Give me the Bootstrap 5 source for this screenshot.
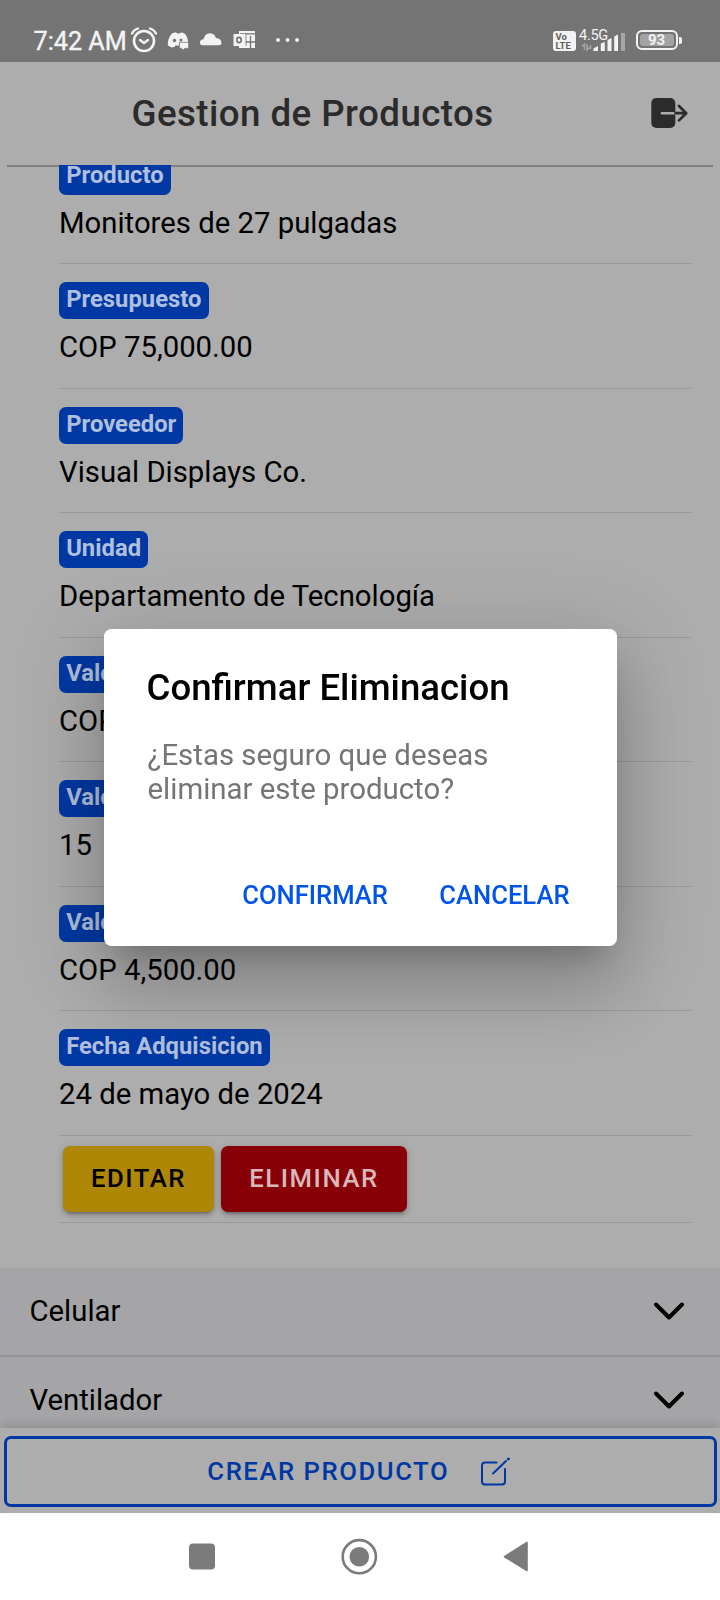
<!DOCTYPE html>
<html lang="es">
<head>
<meta charset="utf-8">
<meta name="viewport" content="width=device-width, initial-scale=1">
<title>Gestion de Productos</title>
<link href="https://cdn.jsdelivr.net/npm/bootstrap@5.3.0/dist/css/bootstrap.min.css" rel="stylesheet">
<style>
:root{--blue:#0038a3;--page:#adadad}
body{font-family:Roboto,"Liberation Sans",sans-serif;background:#fff;color:#000;font-size:29.3px;letter-spacing:0}
.screen{width:720px;height:1600px;overflow:hidden}
svg{display:block;flex:none}
.statusbar{height:62px;background:#747474;color:#f3f3f3;padding:20px 37px 0 33.5px}
.clock{font-size:25.2px;line-height:43px;font-weight:400;-webkit-text-stroke:.4px #f3f3f3;width:96.5px;white-space:nowrap}
.net{font-size:14.6px;line-height:16px;white-space:nowrap;letter-spacing:-.3px}
.volte{width:23px;height:20px;border-radius:3px;background:#f3f3f3;color:#606060;font-size:9.5px;line-height:8.5px;font-weight:700;padding:2px 0 0 3px}
.batt{width:42px;height:20px;border:2px solid #f3f3f3;border-radius:6px;padding:2px}
.batt-fill{background:#a3a3a3;border-radius:3px;font-size:15px;line-height:13px;font-weight:700;height:12px}
.batt-tip{width:3px;height:7px;background:#f3f3f3;border-radius:0 2px 2px 0}
.topbar{height:102.5px;background:var(--page);color:#2b2b2b;padding:0 32px 0 131.5px}
.topbar h1{font-size:36.7px;font-weight:500;line-height:44px;letter-spacing:.44px;margin:1px 0 0}
.content{height:1263.5px;background:var(--page)}
.rule{height:2px;margin:0 7px -27px;background:#808080}
.details{margin:0 29px 45px 59px;position:relative}
.field{height:124.5px;padding-top:18px;border-bottom:1.3px solid #999}
.field .badge{display:block;width:max-content;height:37px;padding:0 7.2px 3px;border-radius:7px;background:var(--blue);color:#b0bfdd;font-size:23.8px;line-height:34.2px;font-weight:700}
.field p{margin:10.2px 0 0;line-height:36px}
.actions{height:87.5px;padding:10.6px 0 0 4px;gap:7px;border-bottom:1.3px solid #999}
.actions .btn{height:66px;border:0;border-radius:7px;font-size:25.7px;font-weight:500;letter-spacing:1.54px;line-height:62px;padding:0 0 2.6px;color:#000;box-shadow:0 5px 2px -4px rgba(0,0,0,.2),0 3px 4px rgba(0,0,0,.2),0 1px 8px rgba(0,0,0,.12)}
.edit{width:151px;background:#ad8705!important}
.del{width:186px;background:#870008!important;color:#d8b8ba!important}
.product{height:89px;background:#a5a5a7;border-bottom:2px solid #949496;padding:1px 34px 0 29.5px}
.product svg{margin-top:-2px}
.footbar{position:relative;height:85px;background:var(--page);padding:8px 3.5px 6px 4px;box-shadow:0 -3px 9px rgba(0,0,0,.13)}
.footbar .btn{border:3px solid var(--blue);border-radius:7px;color:var(--blue);font-size:25.7px;font-weight:500;letter-spacing:1.54px;line-height:60px;padding:0 3px 2px 0}
.sysnav{height:87px;background:#fff}
.confirm{--bs-modal-width:513px;width:720px;height:1575px}
.confirm .modal-dialog{margin:0 0 0 104px;min-height:100%}
.confirm .modal-content{height:317px;border:0;border-radius:7.5px;padding:37px 36px 0 42.5px;box-shadow:0 20px 28px -13px rgba(0,0,0,.2),0 44px 70px 6px rgba(0,0,0,.14),0 17px 85px 15px rgba(0,0,0,.12)}
.confirm h2{font-size:36.6px;line-height:44px;font-weight:500;margin:0 0 27.5px}
.confirm p{font-size:29.4px;line-height:34.6px;color:#757575;margin:0 0 0 1px;width:400px}
.confirm .btn{border:0;padding:0 11.5px;font-size:25.6px;font-weight:500;line-height:40px;color:#0054e9}
</style>
</head>
<body>
<div class="screen d-flex flex-column">
  <div class="statusbar d-flex align-items-start">
    <div class="clock">7:42 AM</div>
    <svg width="28" height="28" style="margin-top:6px" viewBox="0 0 28 28" fill="none" stroke="#f3f3f3" stroke-linecap="round"><circle cx="14" cy="15" r="10" stroke-width="2.6"/><path d="M10 14l4 3 4-3" stroke-width="2.4"/><path d="M2 7.500Q4 3.500 8 2.500M20 2.500q4 1 6 5" stroke-width="2.300"/></svg>
    <svg width="24" height="28" style="margin:6px 0 0 9px" viewBox="0 0 24 28"><path d="M5 7.500Q7 6 9 6.500l1.500 1h2l1.500-1q4 0 5.500 3.500 1.500 3 1.500 6h-9v4.500H8.500L5 21.500.8 19.500Q.6 12 5 7.500z" fill="#f3f3f3"/><circle cx="7.500" cy="14.500" r="1.700" fill="#747474"/><circle cx="14" cy="14" r="1.500" fill="#747474"/><path d="M8 19.500h4.500V23H8z" fill="#747474"/><path d="M12.500 16.300h9v6h-3.500l-2 1.700-1.500-1.700h-2z" fill="#f3f3f3" stroke="#747474" stroke-width=".6"/></svg>
    <svg width="24" height="28" style="margin:6px 0 0 8px" viewBox="0 0 24 28"><path d="M3.500 19.300Q.6 19 .9 16.300 1.500 13.500 4.500 13.300 6 7 11 7.200q4.500.3 6 4.800 5.500.8 5.500 4.800 0 2.500-2.500 2.500z" fill="#f3f3f3"/></svg>
    <svg width="24" height="28" style="margin:6px 0 0 10px" viewBox="0 0 24 28"><path d="M6 5h16v17H6z" fill="#f3f3f3"/><path d="M7 7.800h15M17.500 10v12M13 16h9" stroke="#747474" stroke-width="1.300"/><path d="M.5 8h12v12H.5z" fill="#f3f3f3"/><path d="M13 8v12" stroke="#747474" stroke-width=".8"/><ellipse cx="6" cy="14" rx="2.200" ry="2.600" fill="none" stroke="#747474" stroke-width="1.600"/></svg>
    <svg width="26" height="28" style="margin:6px 0 0 18px" viewBox="0 0 26 28" fill="#f3f3f3"><circle cx="3" cy="14" r="1.900"/><circle cx="12.500" cy="14" r="1.900"/><circle cx="22" cy="14" r="1.900"/></svg>
    <div class="volte ms-auto" style="margin-top:11px">Vo<br>LTE</div>
    <div style="margin:6.500px 0 0 3.500px;width:56.500px">
      <div class="net">4.5G</div>
      <svg width="50" height="22" style="margin:-9.500px 0 0 -1px" viewBox="0 0 50 22"><path d="M6.500 17v-6l-2.500 2.500M9 11v6l2.500-2.500M12.500 16v-4" fill="none" stroke="#a6a6a6" stroke-width="1.500"/><path d="M15.500 18v-2.500l4.500-2.500v5zM22.800 18v-7.500l4-1.500v9zM29.500 18V7l4-2v13zM36.200 18V3.500L40 1.500V18z" fill="#f3f3f3"/><path d="M43 18V0h4v18z" fill="#a6a6a6"/></svg>
    </div>
    <div class="batt" style="margin-top:10px"><div class="batt-fill text-center">93</div></div>
    <div class="batt-tip" style="margin:16.500px 1.500px 0 1px"></div>
  </div>

  <header class="topbar d-flex align-items-center justify-content-between">
    <h1>Gestion de Productos</h1>
    <svg width="38" height="32" viewBox="0 0 38 32"><rect x="1.300" y="1" width="24" height="30" rx="5" fill="#2b2b2b"/><path d="M12 16.200h13.500" stroke="#adadad" stroke-width="2.600" stroke-linecap="round"/><path d="M25.500 16.200H36M29 9l7.200 7.200L29 23.400" fill="none" stroke="#2b2b2b" stroke-width="2.700" stroke-linecap="round" stroke-linejoin="round"/></svg>
  </header>

  <main class="content overflow-hidden">
    <div class="rule"></div>
    <div class="details">
      <div class="field"><span class="badge">Producto</span><p>Monitores de 27 pulgadas</p></div>
      <div class="field"><span class="badge">Presupuesto</span><p>COP 75,000.00</p></div>
      <div class="field"><span class="badge">Proveedor</span><p>Visual Displays Co.</p></div>
      <div class="field"><span class="badge">Unidad</span><p>Departamento de Tecnología</p></div>
      <div class="field"><span class="badge">Valor</span><p>COP</p></div>
      <div class="field"><span class="badge">Valor</span><p>15</p></div>
      <div class="field"><span class="badge">Valor</span><p>COP 4,500.00</p></div>
      <div class="field"><span class="badge">Fecha Adquisicion</span><p>24 de mayo de 2024</p></div>
      <div class="actions d-flex">
        <button class="btn edit">EDITAR</button>
        <button class="btn del">ELIMINAR</button>
      </div>
    </div>
    <div class="product d-flex align-items-center justify-content-between">Celular
      <svg width="34" height="22" viewBox="0 0 34 22"><path d="M4 4.500l13 13 13-13" fill="none" stroke="#000" stroke-width="4" stroke-linecap="round" stroke-linejoin="round"/></svg></div>
    <div class="product d-flex align-items-center justify-content-between">Ventilador
      <svg width="34" height="22" viewBox="0 0 34 22"><path d="M4 4.500l13 13 13-13" fill="none" stroke="#000" stroke-width="4" stroke-linecap="round" stroke-linejoin="round"/></svg></div>
  </main>

  <footer class="footbar">
    <button class="btn w-100 h-100 d-flex align-items-center justify-content-center">CREAR PRODUCTO
      <svg width="30" height="30" style="margin-left:31px" viewBox="0 0 30 30" fill="none" stroke="#0038a3" stroke-width="2" stroke-linecap="round" stroke-linejoin="round"><path d="M16.500 6.500H5q-3 0-3 3v16q0 3 3 3h17q3 0 3-3V13M13 17.500L26 5"/><path d="M28.200 3l.3-.2" stroke-width="2.700"/></svg></button>
  </footer>

  <nav class="sysnav d-flex align-items-center">
    <svg width="720" height="87" viewBox="0 0 720 87"><rect x="189" y="30.500" width="26" height="26" rx="4" fill="#7b7b7b"/><circle cx="359.300" cy="43.700" r="16.600" fill="none" stroke="#7b7b7b" stroke-width="2.600"/><circle cx="359.300" cy="43.700" r="9.800" fill="#7b7b7b"/><path d="M504.500 43.700L527 29.500v28z" fill="#7b7b7b" stroke="#7b7b7b" stroke-width="1.600" stroke-linejoin="round"/></svg>
  </nav>
</div>

<div class="modal confirm d-block" role="dialog" aria-labelledby="confirmTitle">
  <div class="modal-dialog modal-dialog-centered">
    <div class="modal-content">
      <h2 id="confirmTitle">Confirmar Eliminacion</h2>
      <p>¿Estas seguro que deseas eliminar este producto?</p>
      <div class="d-flex justify-content-end" style="margin-top:68px;gap:28.500px">
        <button class="btn">CONFIRMAR</button>
        <button class="btn">CANCELAR</button>
      </div>
    </div>
  </div>
</div>
<script src="https://cdn.jsdelivr.net/npm/bootstrap@5.3.0/dist/js/bootstrap.bundle.min.js"></script>
</body>
</html>
